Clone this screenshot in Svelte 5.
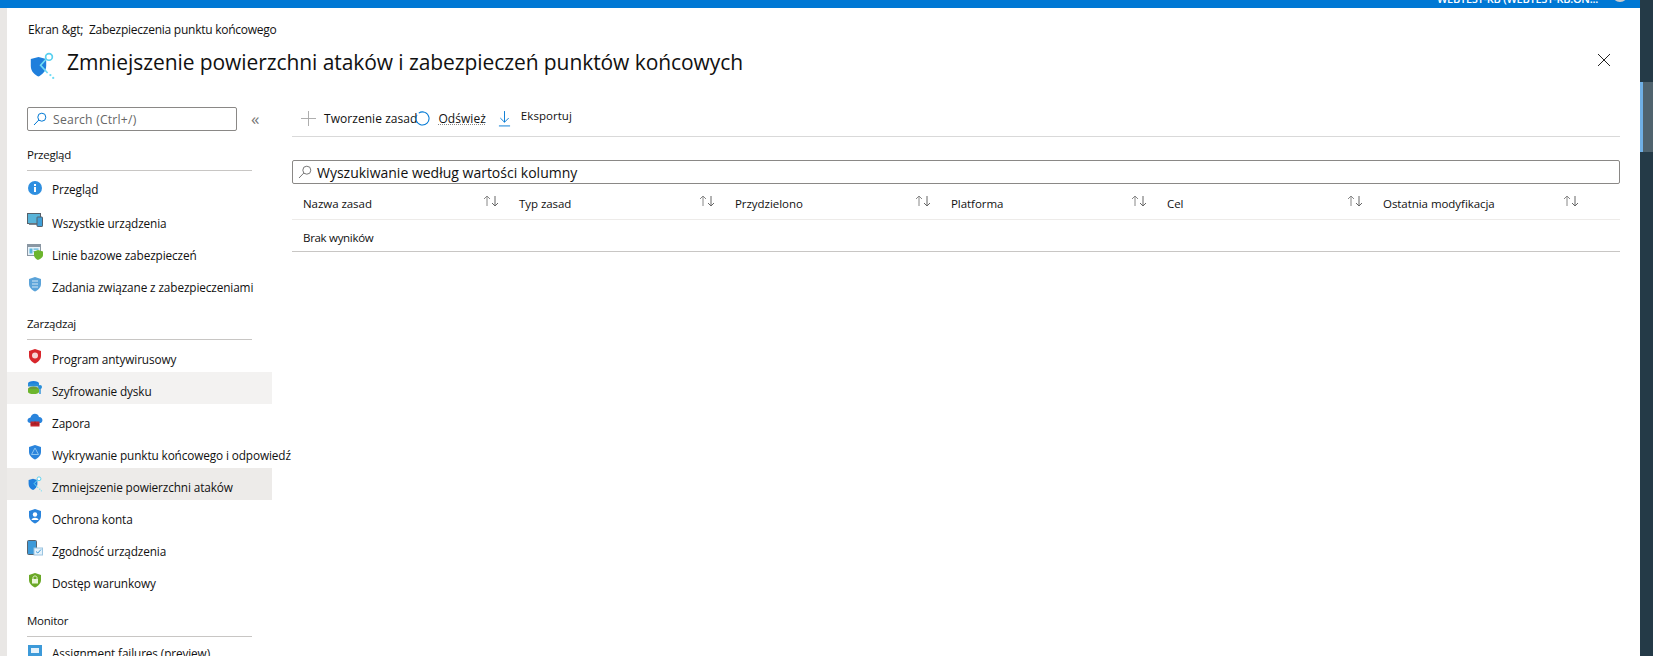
<script>
  const columns = ["Nazwa zasad", "Typ zasad", "Przydzielono", "Platforma", "Cel", "Ostatnia modyfikacja"];

  const sections = [
    { title: "Przegląd", rows: [
      { icon: "info", label: "Przegląd" },
      { icon: "devices", label: "Wszystkie urządzenia" },
      { icon: "baseline", label: "Linie bazowe zabezpieczeń" },
      { icon: "tasks", label: "Zadania związane z zabezpieczeniami" },
    ]},
    { title: "Zarządzaj", rows: [
      { icon: "antivirus", label: "Program antywirusowy" },
      { icon: "disk", label: "Szyfrowanie dysku", hover: true },
      { icon: "firewall", label: "Zapora" },
      { icon: "edr", label: "Wykrywanie punktu końcowego i odpowiedź" },
      { icon: "asr", label: "Zmniejszenie powierzchni ataków", active: true },
      { icon: "account", label: "Ochrona konta" },
      { icon: "compliance", label: "Zgodność urządzenia" },
      { icon: "conditional", label: "Dostęp warunkowy" },
    ]},
    { title: "Monitor", rows: [
      { icon: "failures", label: "Assignment failures (preview)", tight: true },
    ]},
  ];
</script>

{#snippet shield(fill)}
  <path d="M8 1 L14 3 V8 C14 11.5 11 14 8 15.5 C5 14 2 11.5 2 8 V3 Z" fill={fill} />
{/snippet}

{#snippet asrIcon()}
  <path d="M7.5 3.5 L13 5 V10 C13 14 9.5 16.5 7.5 17.5 C5 16.5 2 14 2 10 V5 Z" fill="#1f7fdc" />
  <path d="M13.5 4.5 L9 9.5 L14 15" fill="none" stroke="#6fdcf5" stroke-width="1.2" />
  <circle cx="15" cy="3.5" r="2.4" fill="#fff" stroke="#58d0ef" stroke-width="1.2" />
  <circle cx="16" cy="16.5" r="0.8" fill="#6fdcf5" />
  <circle cx="18" cy="18.5" r="0.8" fill="#6fdcf5" />
{/snippet}

{#snippet rowIcon(name)}
  {#if name === "info"}
    <svg class="ico" viewBox="0 0 16 16"><circle cx="8" cy="8" r="7" fill="#2f8fe0" /><rect x="7" y="7" width="2" height="5" fill="#fff" /><rect x="7" y="4" width="2" height="2" fill="#fff" /></svg>
  {:else if name === "devices"}
    <svg class="ico" viewBox="0 0 16 16"><rect x="0.5" y="1.5" width="13" height="10" fill="#59b4d9" stroke="#55606a" /><rect x="2" y="11.5" width="9" height="1.5" fill="#7a8690" /><rect x="10" y="5" width="5.5" height="9.5" rx="0.6" fill="#3f9fd8" stroke="#55606a" /></svg>
  {:else if name === "baseline"}
    <svg class="ico" viewBox="0 0 16 16"><rect x="0.5" y="0.5" width="13" height="11" fill="#e8f2fa" stroke="#8a97a3" /><rect x="1" y="1" width="12" height="2" fill="#8a97a3" /><rect x="2.5" y="4.5" width="3" height="5" fill="#59b4d9" /><rect x="6.5" y="4.5" width="5" height="1.2" fill="#59b4d9" /><rect x="6.5" y="7" width="5" height="1.2" fill="#59b4d9" /><path d="M11 6 L16 7.5 V11 C16 13.5 13 15 11 16 C9 15 7 13.5 7 11 V7.5 Z" fill="#6cb52d" /></svg>
  {:else if name === "tasks"}
    <svg class="ico" viewBox="0 0 16 16">{@render shield("#5ba3d9")}<path d="M5 5h6M5 8h6M5 11h6" stroke="#d5e8f6" stroke-width="1" /></svg>
  {:else if name === "antivirus"}
    <svg class="ico" viewBox="0 0 16 16">{@render shield("#d8262c")}<circle cx="8" cy="7.5" r="3" fill="#f7d3d3" /></svg>
  {:else if name === "disk"}
    <svg class="ico" viewBox="0 0 16 16"><ellipse cx="6.5" cy="3.5" rx="5.5" ry="2.5" fill="#1f7fdc" /><rect x="1" y="3.5" width="11" height="3" fill="#2a8fd8" /><ellipse cx="6.5" cy="9" rx="5.5" ry="2.5" fill="#6f9a3a" /><rect x="1" y="9" width="11" height="3" fill="#6cb52d" /><ellipse cx="6.5" cy="12" rx="5.5" ry="2" fill="#6cb52d" /><circle cx="13" cy="7" r="2" fill="#2a8fd8" /><rect x="12.3" y="8" width="1.4" height="6" fill="#2a8fd8" /></svg>
  {:else if name === "firewall"}
    <svg class="ico" viewBox="0 0 16 16"><path d="M3.5 11 C-0.5 11 -0.5 6 3.5 5.5 C4.5 0.5 11 0.5 12 5 C16.5 5 16.5 11 12.5 11 Z" fill="#2a84dc" /><rect x="3.5" y="9.5" width="9" height="5" fill="#c4262e" /><path d="M3.5 12h9M8 9.5v2.5" stroke="#8a1a20" stroke-width="0.7" /></svg>
  {:else if name === "edr"}
    <svg class="ico" viewBox="0 0 16 16">{@render shield("#2a84dc")}<path d="M8 4 L11.5 10.5 H4.5 Z" fill="none" stroke="#8cc4f0" stroke-width="1" /></svg>
  {:else if name === "asr"}
    <svg class="ico" viewBox="0 0 20 20">{@render asrIcon()}</svg>
  {:else if name === "account"}
    <svg class="ico" viewBox="0 0 16 16">{@render shield("#2a84dc")}<circle cx="8" cy="6.5" r="2.2" fill="#fff" /><path d="M4.5 12 C5 9 11 9 11.5 12 Z" fill="#fff" /></svg>
  {:else if name === "compliance"}
    <svg class="ico" viewBox="0 0 16 16"><rect x="0.5" y="0.5" width="9" height="14" rx="1" fill="#3d9ad9" stroke="#59636d" /><rect x="7" y="8" width="8.5" height="7" fill="#e5f2fb" stroke="#9bc4e0" /><path d="M9 11.5 L10.8 13 L14 9.5" fill="none" stroke="#3d9ad9" /></svg>
  {:else if name === "conditional"}
    <svg class="ico" viewBox="0 0 16 16">{@render shield("#6aa827")}<rect x="5" y="7" width="6" height="4.5" fill="#eaf5da" /><path d="M6 7 V5.5 C6 3.5 10 3.5 10 5.5 V7" fill="none" stroke="#eaf5da" /></svg>
  {:else}
    <svg class="ico" viewBox="0 0 16 16"><rect x="1" y="1" width="14" height="11" fill="#3d9ad9" /><rect x="4" y="4" width="8" height="5" fill="#e5f2fb" /></svg>
  {/if}
{/snippet}

<div class="shell">
  <div class="edge"></div>
  <div class="page">
    <div class="topbar">
      <span class="account">WEBTEST-RB (WEBTEST-RB.ON...</span>
      <span class="avatar"></span>
    </div>
    <div class="crumb">Ekran &amp;gt;&nbsp; Zabezpieczenia punktu końcowego</div>
    <div class="heading">
      <svg class="logo" viewBox="0 0 20 20">{@render asrIcon()}</svg>
      <h1>Zmniejszenie powierzchni ataków i zabezpieczeń punktów końcowych</h1>
      <svg class="close" viewBox="0 0 12 12"><path d="M0 0 L12 12 M12 0 L0 12" stroke="#222" stroke-width="1" /></svg>
    </div>

    <div class="body">
      <nav class="side">
        <div class="side-search">
          <div class="searchbox">
            <svg viewBox="0 0 14 14" class="glass"><circle cx="8.8" cy="5.2" r="4" fill="none" stroke="#0078d4" /><path d="M5.8 8 L1 13" stroke="#0078d4" /></svg>
            <span>Search (Ctrl+/)</span>
          </div>
          <span class="collapse">«</span>
        </div>
        {#each sections as s, i}
          <div class="section" class:last={i === sections.length - 1}>{s.title}</div>
          {#each s.rows as r}
            <div class="row" class:hover={r.hover} class:active={r.active} class:tight={r.tight}>
              {@render rowIcon(r.icon)}
              <span class="label">{r.label}</span>
            </div>
          {/each}
        {/each}
      </nav>

      <main class="content">
        <div class="toolbar">
          <div class="tool create">
            <svg class="plus" viewBox="0 0 16 16"><path d="M8 0 V16 M0 8 H16" stroke="#a9a9a9" stroke-width="1" /></svg>
            <span>Tworzenie zasad</span>
          </div>
          <div class="tool refresh">
            <svg class="refresh-ico" viewBox="0 0 16 16"><path d="M4 2.2 A7 7 0 1 1 2.2 4" fill="none" stroke="#0078d4" stroke-width="1.1" /></svg>
            <span class="under">Odśwież</span>
          </div>
          <div class="tool export">
            <svg class="down" viewBox="0 0 14 18"><path d="M7 1 V13 M2.5 8.5 L7 13 L11.5 8.5 M1 17 H13" fill="none" stroke="#0078d4" stroke-width="1" /></svg>
            <span class="raised">Eksportuj</span>
          </div>
        </div>

        <div class="filter">
          <svg viewBox="0 0 14 14" class="glass grey"><circle cx="8.8" cy="5.2" r="4" fill="none" stroke="#777" /><path d="M5.8 8 L1 13" stroke="#777" /></svg>
          <span>Wyszukiwanie według wartości kolumny</span>
        </div>

        <div class="thead">
          {#each columns as c}
            <div class="th">
              <span class="th-label">{c}</span>
              <svg class="sort" viewBox="0 0 17 12"><path d="M4 11 V1 M1 4 L4 1 L7 4" fill="none" stroke="#888" /><path d="M12 1 V11 M9 8 L12 11 L15 8" fill="none" stroke="#666" /></svg>
            </div>
          {/each}
        </div>
        <div class="empty">Brak wyników</div>
      </main>
    </div>
  </div>
  <div class="right-edge">
    <div class="thumb"></div>
  </div>
</div>

<style>
  :global(body) {
    margin: 0;
    background: #fff;
    overflow: hidden;
  }
  .shell {
    display: flex;
    width: 1653px;
    height: 656px;
    overflow: hidden;
    font-family: "Open Sans", "Noto Sans", sans-serif;
    color: #111;
  }
  .edge {
    width: 7px;
    background: #e9e7e5;
    margin-top: 8px;
    flex: none;
  }
  .page {
    flex: 1;
    min-width: 0;
    display: flex;
    flex-direction: column;
    margin-left: -7px;
  }
  .topbar {
    height: 8px;
    flex: none;
    background: #0078d4;
    display: flex;
    justify-content: flex-end;
    align-items: flex-end;
    gap: 14px;
    padding-right: 12px;
    overflow: hidden;
  }
  .account {
    color: #fff;
    font-size: 11px;
    line-height: 14px;
    height: 14px;
    margin-bottom: 2px;
    font-weight: 600;
    letter-spacing: -0.25px;
    white-space: nowrap;
  }
  .avatar {
    width: 16px;
    height: 16px;
    margin-bottom: 6px;
    border-radius: 50%;
    background: #c9ccce;
    flex: none;
  }
  .crumb {
    font-size: 12px;
    line-height: 16px;
    padding: 14px 0 0 28px;
    letter-spacing: -0.25px;
  }
  .heading {
    display: flex;
    align-items: center;
    height: 36px;
    padding-left: 28px;
    margin-top: 6px;
  }
  .logo {
    width: 28px;
    height: 28px;
    flex: none;
    margin-right: 11px;
    margin-top: 7px;
  }
  h1 {
    margin: 0;
    font-size: 21px;
    font-weight: 400;
    line-height: 26px;
    letter-spacing: -0.08px;
    white-space: nowrap;
  }
  .close {
    width: 12px;
    height: 12px;
    margin-left: auto;
    margin-right: 30px;
    margin-top: -4px;
    flex: none;
  }
  .body {
    display: flex;
    flex: 1;
    min-height: 0;
    margin-top: 27px;
    padding-left: 7px;
  }
  .side {
    width: 265px;
    flex: none;
  }
  .side-search {
    display: flex;
    align-items: center;
    padding-left: 20px;
    height: 24px;
  }
  .searchbox {
    box-sizing: border-box;
    width: 210px;
    height: 24px;
    border: 1px solid #8a8886;
    border-radius: 2px;
    display: flex;
    align-items: center;
    padding-left: 5px;
    font-size: 12.2px;
    color: #666;
    letter-spacing: 0.2px;
  }
  .glass {
    width: 14px;
    height: 14px;
    flex: none;
    margin-right: 6px;
  }
  .glass.grey {
    margin-right: 5px;
  }
  .collapse {
    margin-left: 14px;
    font-size: 17px;
    line-height: 20px;
    color: #777;
  }
  .section {
    margin: 12px 20px 0 20px;
    width: 225px;
    height: 28px;
    box-sizing: border-box;
    border-bottom: 1px solid #c8c6c4;
    font-size: 11.5px;
    line-height: 16px;
    padding-top: 4px;
    letter-spacing: -0.25px;
  }
  .section.last {
    margin-top: 13px;
  }
  .row {
    height: 32px;
    display: flex;
    align-items: center;
    gap: 9px;
    padding-left: 20px;
    font-size: 11.8px;
    white-space: nowrap;
    letter-spacing: -0.12px;
  }
  .side-search + .section + .row {
    margin-top: 1px;
  }
  .side-search + .section + .row .label {
    padding-top: 1px;
  }
  .row.tight {
    margin-top: -1px;
  }
  .label {
    padding-top: 5px;
  }
  .tight .label {
    padding-top: 1px;
  }
  .row.hover {
    background: #f3f2f1;
  }
  .row.active {
    background: #edebe9;
  }
  .ico {
    width: 16px;
    height: 16px;
    flex: none;
  }
  .content {
    flex: 1;
    min-width: 0;
    padding: 0 20px 0 20px;
  }
  .toolbar {
    display: flex;
    align-items: center;
    height: 36px;
    padding-top: 4px;
    margin-top: -11px;
    border-bottom: 1px solid #d9d9d9;
    font-size: 12px;
    letter-spacing: 0.05px;
  }
  .tool {
    display: flex;
    align-items: center;
    white-space: nowrap;
  }
  .plus {
    width: 15px;
    height: 15px;
    margin: 0 8px 0 9px;
  }
  .refresh-ico {
    width: 15px;
    height: 15px;
    margin-left: -2px;
    margin-right: 8px;
  }
  .under {
    text-decoration: underline dotted #888;
  }
  .export {
    margin-left: 12px;
  }
  .down {
    width: 13px;
    height: 17px;
    margin-right: 10px;
  }
  .raised {
    margin-top: -6px;
    font-size: 11.5px;
  }
  .filter {
    box-sizing: border-box;
    margin-top: 23px;
    height: 24px;
    border: 1px solid #8a8886;
    border-radius: 2px;
    display: flex;
    align-items: center;
    padding-left: 5px;
    font-size: 14px;
  }
  .thead {
    display: grid;
    grid-template-columns: repeat(6, 216px);
    height: 35px;
    border-bottom: 1px solid #edebe9;
  }
  .th {
    display: flex;
    align-items: center;
    justify-content: space-between;
    padding: 0 8px 0 11px;
    font-size: 11.5px;
    letter-spacing: -0.05px;
  }
  .th-label {
    padding-top: 4px;
  }
  .sort {
    width: 17px;
    height: 12px;
    margin-top: -2px;
  }
  .empty {
    height: 32px;
    padding-left: 11px;
    padding-top: 3px;
    box-sizing: border-box;
    display: flex;
    align-items: center;
    border-bottom: 1px solid #c8c6c4;
    font-size: 11.5px;
    letter-spacing: -0.3px;
  }
  .right-edge {
    width: 13px;
    flex: none;
    background: #243a47;
    padding-top: 82px;
  }
  .thumb {
    height: 70px;
    width: 10px;
    background: #4f636e;
    border-left: 3px solid #6fb0e6;
  }
</style>
